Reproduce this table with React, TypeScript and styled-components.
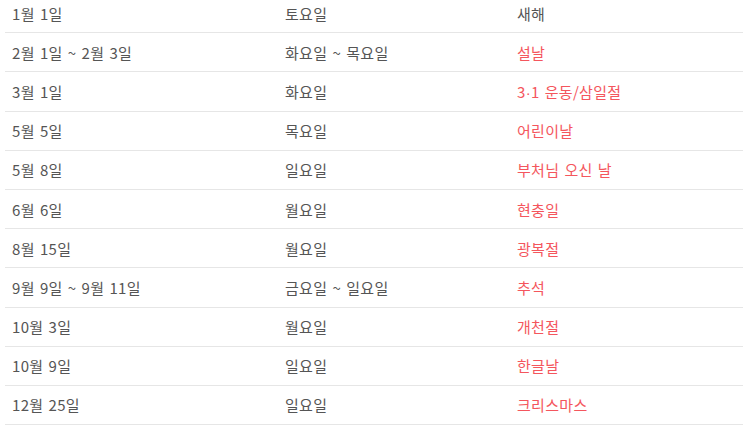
import { createGlobalStyle, styled } from "styled-components";

const GlobalStyle = createGlobalStyle`
  html, body {
    margin: 0;
    padding: 0;
    background: #ffffff;
    overflow: hidden;
  }
`;

const Wrapper = styled.div`
  padding-left: 5px;
  margin-top: -6px;
  font-family: "Noto Sans CJK KR", "Noto Sans", sans-serif;
  font-size: 15px;
  letter-spacing: 0.3px;
  word-spacing: 1.5px;
  color: #555555;
`;

const Table = styled.div`
  width: 738px;
`;

const Row = styled.div`
  display: grid;
  grid-template-columns: 273px 232px 1fr;
  align-items: center;
  height: 39.2px;
  box-sizing: border-box;
  border-bottom: 1px solid #e6e6e6;
`;

const Cell = styled.div<{ $red?: boolean }>`
  padding-left: 7px;
  color: ${(p) => (p.$red ? "#f4565d" : "#555555")};
  white-space: nowrap;
`;

const Dot = styled.span`
  font-family: "Liberation Sans", sans-serif;
`;

const holidays: [string, string, React.ReactNode, boolean][] = [
  ["1월 1일", "토요일", "새해", false],
  ["2월 1일 ~ 2월 3일", "화요일 ~ 목요일", "설날", true],
  ["3월 1일", "화요일", <>3<Dot>·</Dot>1 운동/삼일절</>, true],
  ["5월 5일", "목요일", "어린이날", true],
  ["5월 8일", "일요일", "부처님 오신 날", true],
  ["6월 6일", "월요일", "현충일", true],
  ["8월 15일", "월요일", "광복절", true],
  ["9월 9일 ~ 9월 11일", "금요일 ~ 일요일", "추석", true],
  ["10월 3일", "월요일", "개천절", true],
  ["10월 9일", "일요일", "한글날", true],
  ["12월 25일", "일요일", "크리스마스", true],
];

function App() {
  return (
    <>
      <GlobalStyle />
      <Wrapper>
        <Table>
          {holidays.map(([date, day, name, red]) => (
            <Row key={date}>
              <Cell>{date}</Cell>
              <Cell>{day}</Cell>
              <Cell $red={red}>{name}</Cell>
            </Row>
          ))}
        </Table>
      </Wrapper>
    </>
  );
}

export default App;
